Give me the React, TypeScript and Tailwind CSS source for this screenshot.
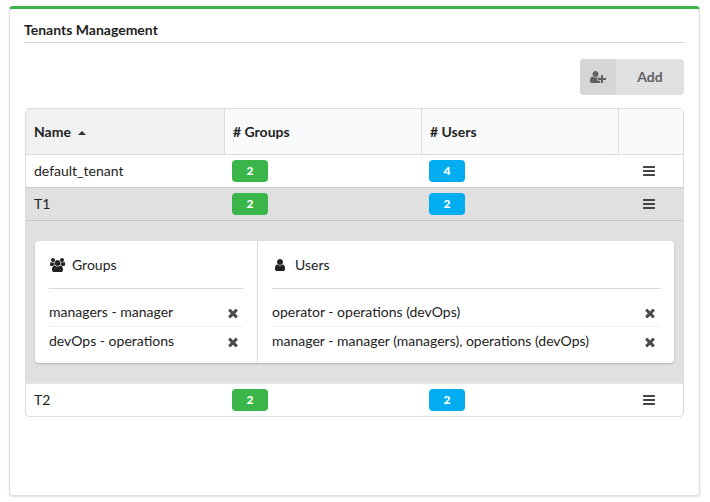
import React from "react";

const PATHS = {
  users: {
    w: 1920,
    d: "M593 896q-162 5-265 128h-134q-82 0-138-40.5t-56-118.5q0-353 124-353 6 0 43.5 21t97.5 42.5 119 21.5q67 0 133-23-5 37-5 66 0 159 93 290zm1071 637q0 120-73 189.5t-194 69.5h-874q-121 0-194-69.5t-73-189.5q0-53 3.5-103.5t14-109 26.5-108.5 43-97.5 62-81 85.5-53.5 111.5-20q10 0 43 21.5t73 48 107 48 135 21.5 135-21.5 107-48 73-48 43-21.5q61 0 111.5 20t85.5 53.5 62 81 43 97.5 26.5 108.5 14 109 3.5 103.5zm-1024-1277q0 106-75 181t-181 75-181-75-75-181 75-181 181-75 181 75 75 181zm704 384q0 159-112.5 271.5t-271.5 112.5-271.5-112.5-112.5-271.5 112.5-271.5 271.5-112.5 271.5 112.5 112.5 271.5zm576 225q0 78-56 118.5t-138 40.5h-134q-103-123-265-128 93-131 93-290 0-29-5-66 66 23 133 23 59 0 119-21.5t97.5-42.5 43.5-21q124 0 124 353zm-128-609q0 106-75 181t-181 75-181-75-75-181 75-181 181-75 181 75 75 181z",
  },
  user: {
    w: 1792,
    d: "M1536 1399q0 109-62.5 187t-150.5 78h-854q-88 0-150.5-78t-62.5-187q0-85 8.5-160.5t31.5-152 58.5-131 94-89 134.5-34.5q131 128 313 128t313-128q76 0 134.5 34.5t94 89 58.5 131 31.5 152 8.5 160.5zm-256-887q0 159-112.5 271.5t-271.5 112.5-271.5-112.5-112.5-271.5 112.5-271.5 271.5-112.5 271.5 112.5 112.5 271.5z",
  },
  remove: {
    w: 1792,
    d: "M1490 1322q0 40-28 68l-136 136q-28 28-68 28t-68-28l-294-294-294 294q-28 28-68 28t-68-28l-136-136q-28-28-28-68t28-68l294-294-294-294q-28-28-28-68t28-68l136-136q28-28 68-28t68 28l294 294 294-294q28-28 68-28t68 28l136 136q28 28 28 68t-28 68l-294 294 294 294q28 28 28 68z",
  },
  bars: {
    w: 1792,
    d: "M1664 1344v128q0 26-19 45t-45 19h-1408q-26 0-45-19t-19-45v-128q0-26 19-45t45-19h1408q26 0 45 19t19 45zm0-512v128q0 26-19 45t-45 19h-1408q-26 0-45-19t-19-45v-128q0-26 19-45t45-19h1408q26 0 45 19t19 45zm0-512v128q0 26-19 45t-45 19h-1408q-26 0-45-19t-19-45v-128q0-26 19-45t45-19h1408q26 0 45 19t19 45z",
  },
  userPlus: {
    w: 2048,
    d: "M704 896q-159 0-271.5-112.5t-112.5-271.5 112.5-271.5 271.5-112.5 271.5 112.5 112.5 271.5-112.5 271.5-271.5 112.5zm960 128h352q13 0 22.5 9.5t9.5 22.5v192q0 13-9.5 22.5t-22.5 9.5h-352v352q0 13-9.5 22.5t-22.5 9.5h-192q-13 0-22.5-9.5t-9.5-22.5v-352h-352q-13 0-22.5-9.5t-9.5-22.5v-192q0-13 9.5-22.5t22.5-9.5h352v-352q0-13 9.5-22.5t22.5-9.5h192q13 0 22.5 9.5t9.5 22.5v352zm-736 224q0 52 38 90t90 38h256v238q-68 50-171 50h-874q-121 0-194-69t-73-190q0-53 3.5-103.5t14-109 26.5-108.5 43-97.5 62-81 85.5-53.5 111.5-20q19 0 39 17 79 61 154.5 91.5t164.5 30.5 164.5-30.5 154.5-91.5q20-17 39-17 132 0 217 96h-223q-52 0-90 38t-38 90v192z",
  },
};

function Icon({ name, className = "" }: { name: keyof typeof PATHS; className?: string }) {
  const { w, d } = PATHS[name];
  return (
    <svg viewBox={`0 0 ${w} 1792`} className={`h-3.5 shrink-0 ${className}`} fill="currentColor">
      <path d={d} />
    </svg>
  );
}

function Badge({ value, color }: { value: number; color: string }) {
  return (
    <span className={`flex h-[22px] w-9 items-center justify-center rounded text-xs leading-none font-black text-white ${color}`}>
      {value}
    </span>
  );
}

const COLS = "grid grid-cols-[198px_197px_197px_65px]";

function TenantRow({ name, groups, users, className = "" }: { name: string; groups: number; users: number; className?: string }) {
  return (
    <div className={`${COLS} h-[33px] items-center border-t ${className}`}>
      <div className="pl-2">{name}</div>
      <div className="pl-2">
        <Badge value={groups} color="bg-[#39b54a]" />
      </div>
      <div className="pl-2">
        <Badge value={users} color="bg-[#00adf1]" />
      </div>
      <div className="flex pl-[24px] text-[#444]">
        <Icon name="bars" className="w-3.5" />
      </div>
    </div>
  );
}

function ItemList({ items }: { items: string[] }) {
  return (
    <div className="mt-2">
      {items.map((item, i) => (
        <div key={item} className={`flex h-[29px] items-center justify-between pr-[3px] ${i > 0 ? "border-t border-[#eee]" : ""}`}>
          <span>{item}</span>
          <Icon name="remove" className="mt-0.5 w-3.5 text-[#4a4a4a]" />
        </div>
      ))}
    </div>
  );
}

export default function App() {
  return (
    <div className="h-[502px] w-[710px] bg-white pt-1.5 pl-[9px] font-['Lato',sans-serif] text-sm leading-[18px] text-[#222]">
      <section className="h-[490px] w-[691px] rounded border border-t-[3px] border-[#dededf] border-t-[#39b54a] px-3.5 shadow-[0_1px_2px_0_rgba(34,36,38,0.15)]">
        <h1 className="flex h-[34px] items-end border-b border-[#d8d8d9] pb-[3px] font-bold">Tenants Management</h1>

        <div className="mt-4 flex justify-end pr-px">
          <button className="flex h-9 w-[104px] overflow-hidden rounded bg-[#e0e1e2] font-bold text-[#5f6061]">
            <span className="flex h-9 w-9 items-center justify-center bg-[#d5d6d7]">
              <Icon name="userPlus" className="w-4" />
            </span>
            <span className="flex h-9 flex-1 items-center justify-center">Add</span>
          </button>
        </div>

        <div className="mt-[13px] ml-px w-[659px] overflow-hidden rounded border border-[#dcdcdd]">
          <div className={`${COLS} h-[45px] bg-[#f9fafb] font-bold`}>
            <div className="flex items-center bg-[#f1f1f1] pt-px pl-2">
              Name
              <svg viewBox="0 0 8 4" className="mt-px ml-[7px] h-1 w-2" fill="#333">
                <path d="M4 0 8 4H0z" />
              </svg>
            </div>
            <div className="flex items-center border-l border-[#dcdcdd] pt-px pl-2"># Groups</div>
            <div className="flex items-center border-l border-[#dcdcdd] pt-px pl-2"># Users</div>
            <div className="border-l border-[#dcdcdd]" />
          </div>

          <TenantRow name="default_tenant" groups={2} users={4} className="border-[#dcdcdd]" />
          <TenantRow name="T1" groups={2} users={2} className="border-[#c8c8c8] bg-[#e0e0e0]" />

          <div className="h-[163px] border-t border-[#c8c8c8] bg-[#e0e0e0] pt-5 pl-[9px]">
            <div className="flex h-[122px] w-[639px] rounded bg-white shadow-[0_1px_2px_0_rgba(34,36,38,0.25)]">
              <div className="w-[222px] px-3.5">
                <div className="flex h-12 items-center border-b border-[#d8d8d9]">
                  <Icon name="users" className="ml-px w-[15px]" />
                  <span className="ml-[7px]">Groups</span>
                </div>
                <ItemList items={["managers - manager", "devOps - operations"]} />
              </div>
              <div className="flex-1 border-l border-[#d8d8d9] px-3.5">
                <div className="flex h-12 items-center border-b border-[#d8d8d9]">
                  <Icon name="user" className="ml-px w-3.5" />
                  <span className="ml-2">Users</span>
                </div>
                <ItemList items={["operator - operations (devOps)", "manager - manager (managers), operations (devOps)"]} />
              </div>
            </div>
          </div>

          <TenantRow name="T2" groups={2} users={2} className="border-[#e8e8e8]" />
        </div>
      </section>
    </div>
  );
}
